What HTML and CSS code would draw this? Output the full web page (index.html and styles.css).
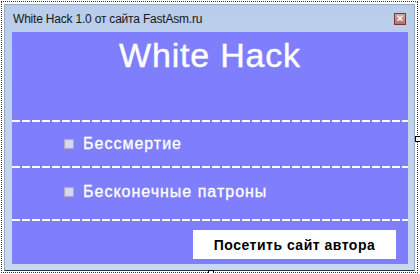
FILE: index.html
```html
<!DOCTYPE html>
<html lang="ru">
<head>
    <meta charset="UTF-8">
    <title>White Hack 1.0</title>
    <link rel="stylesheet" href="styles.css">
</head>
<body>
    <div class="selection">
        <div class="window">
            <div class="titlebar">
                <span class="caption">White Hack 1.0 от сайта FastAsm.ru</span>
                <span class="close">&#215;</span>
            </div>
            <div class="content">
                <div class="header">White Hack</div>
                <div class="divider"></div>
                <label class="option option-first">
                    <span class="box"></span>
                    <span class="option-text">Бессмертие</span>
                </label>
                <div class="divider"></div>
                <label class="option option-second">
                    <span class="box"></span>
                    <span class="option-text">Бесконечные патроны</span>
                </label>
                <div class="divider"></div>
                <div class="footer">
                    <button class="visit-button">Посетить сайт автора</button>
                </div>
            </div>
        </div>
        <span class="handle handle-bottom"></span>
        <span class="handle handle-right"></span>
    </div>
</body>
</html>
```

FILE: styles.css
```css
body {
    margin: 0;
    background: #fff;
    font-family: "Liberation Sans", Arial, sans-serif;
}
.selection {
    position: relative;
    box-sizing: border-box;
    width: 417px;
    height: 272px;
    margin: 1px 0 0 1px;
    padding: 2px;
    border: 1px dotted #333;
}
.window {
    box-sizing: border-box;
    width: 411px;
    height: 267px;
    padding: 0 6px 7px 7px;
    background: linear-gradient(#b9cdea, #c8d9ef);
    border: 1px solid #95acc9;
    border-bottom-color: #2a3440;
}
.titlebar {
    display: flex;
    align-items: center;
    justify-content: space-between;
    height: 27px;
}
.caption {
    font-size: 12px;
    letter-spacing: -0.2px;
    color: #161616;
    padding-left: 1px;
}
.close {
    display: flex;
    align-items: center;
    justify-content: center;
    width: 10px;
    height: 10px;
    margin-right: 2px;
    font-size: 11px;
    line-height: 1;
    font-weight: bold;
    color: #fff;
    background: linear-gradient(#d9a7a7, #b76e70);
    border: 1px solid #6e3838;
}
.content {
    height: 232px;
    background: #7f7ffd;
    display: flex;
    flex-direction: column;
}
.header {
    height: 88px;
    padding-top: 4px;
    box-sizing: border-box;
    text-align: center;
    color: #fff;
    font-size: 34px;
    letter-spacing: 0.8px;
    -webkit-text-stroke: 0.4px #fff;
}
.divider {
    height: 2px;
    background: repeating-linear-gradient(to right, #fff 0 8px, transparent 8px 10px);
}
.option {
    display: flex;
    align-items: center;
    gap: 9px;
    padding-left: 52px;
    color: #fff;
    font-size: 16px;
    letter-spacing: 1px;
    -webkit-text-stroke: 0.3px #fff;
}
.option-first {
    height: 44px;
}
.option-second {
    height: 51px;
    padding-bottom: 4px;
    box-sizing: border-box;
}
.box {
    width: 8px;
    height: 8px;
    background: #d6d6ee;
    border: 1px solid #a8a8c8;
}
.footer {
    display: flex;
    justify-content: flex-end;
    padding: 9px 12px 0 0;
}
.visit-button {
    width: 203px;
    height: 29px;
    border: none;
    background: #fff;
    color: #000;
    font-family: "Liberation Sans", Arial, sans-serif;
    font-size: 14px;
    font-weight: bold;
    letter-spacing: 0.5px;
}
.handle {
    position: absolute;
    width: 4px;
    height: 4px;
    background: #fff;
    border: 1px solid #000;
}
.handle-bottom {
    left: 206px;
    bottom: -4px;
}
.handle-right {
    right: -4px;
    top: 134px;
}
```
